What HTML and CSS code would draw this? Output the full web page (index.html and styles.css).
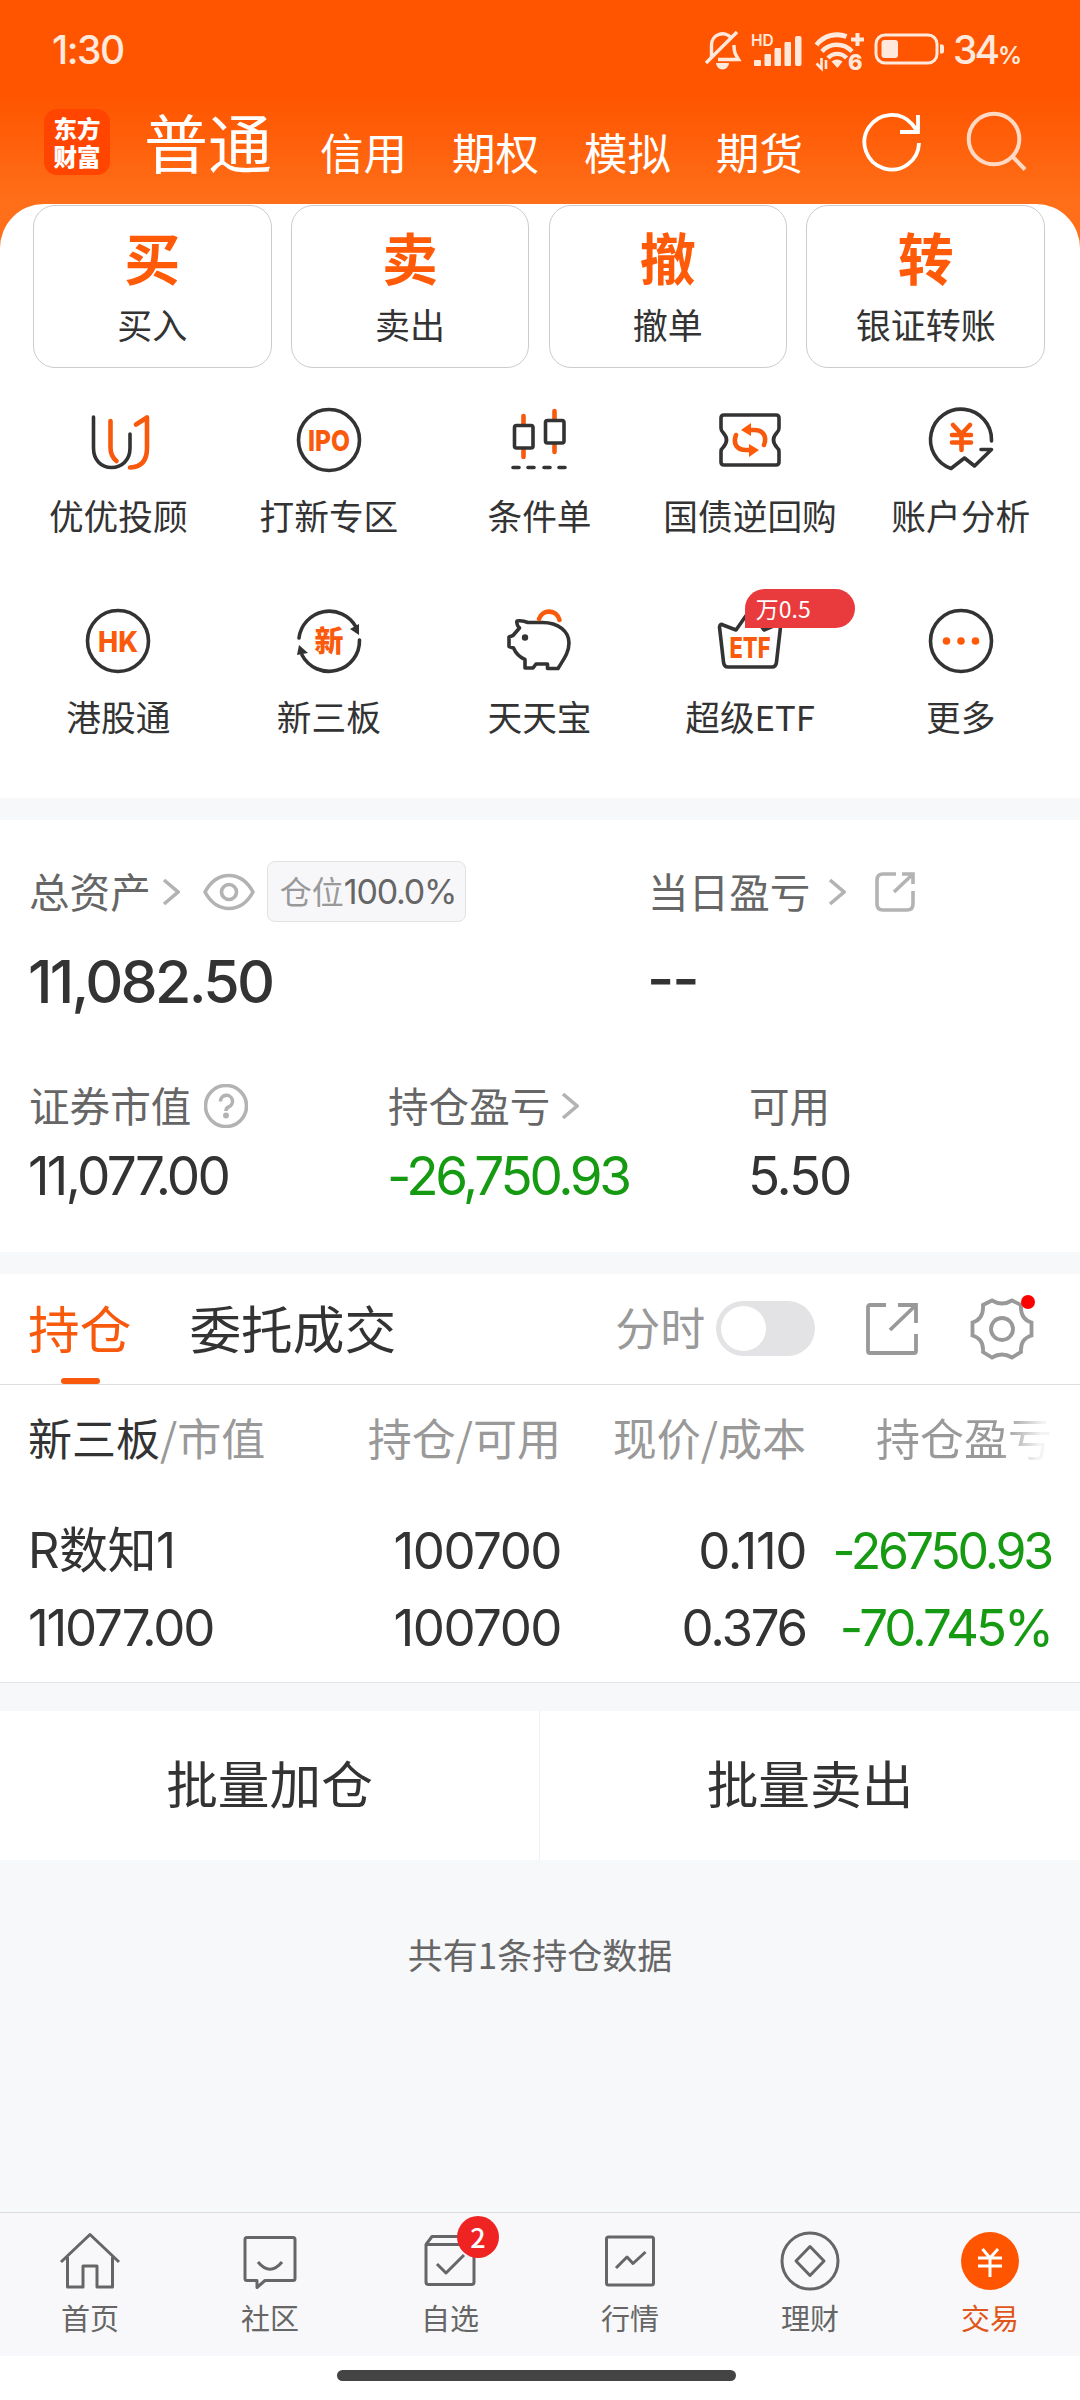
FILE: index.html
```html
<!DOCTYPE html>
<html lang="zh-CN">
<head>
<meta charset="utf-8">
<title>交易</title>
<link rel="stylesheet" href="styles.css">
</head>
<body>
<div class="top">
  <div class="status">
    <span class="clock">1:30</span>
    <div class="status-icons">
      <svg class="st-bell" width="40" height="44" viewBox="0 0 40 44" fill="none" stroke="#ffe9dc" stroke-width="3.4"><path d="M8.500 30V18a11 11 0 0 1 20-6.500M31 18c0 7 1 9 4.500 14.500H15"/><path d="M3 36 34 5"/><path d="M13 36a6.500 6.500 0 0 0 13 0z" fill="#ffe9dc" stroke="none"/></svg>
      <svg class="st-signal" width="54" height="44" viewBox="0 0 54 44" fill="#ffe9dc"><text x="0" y="19" class="hd">HD</text><rect x="3" y="33" width="7" height="6" rx="1"/><rect x="13.500" y="27" width="6.500" height="12" rx="1"/><rect x="23.500" y="21" width="6.500" height="18" rx="1"/><rect x="33.500" y="15" width="6.500" height="24" rx="1"/><rect x="44" y="9" width="6.500" height="30" rx="2"/></svg>
      <svg class="st-wifi" width="52" height="52" viewBox="0 -4 52 52" fill="none" stroke="#ffe9dc"><path d="M2.500 18c7-9.500 20-12.500 30-8.500" stroke-width="4.800"/><path d="M8 24.500c7.500-9 22-9 30 0" stroke-width="4.400"/><path d="M14 31c5-5.500 13.500-5.500 18.500 0" stroke-width="4.400"/><path d="M17.500 34.500q5.500-4 11 0L23.500 41z" fill="#ffe9dc" stroke="none"/><path d="M43.500 6v13M37 12.500h13" stroke-width="4"/><path d="M7.500 31v10.500l-5-5M12 42V33" stroke-width="2.600"/><text x="34" y="43" class="six">6</text></svg>
      <svg class="st-battery" width="71" height="34" viewBox="0 0 71 34" fill="none" stroke="#ffe9dc"><rect x="2" y="3" width="61" height="28" rx="9" stroke-width="3"/><rect x="7.500" y="8" width="16.500" height="18" rx="3" fill="#ffe9dc" stroke="none"/><path d="M66 12.500h2q2 0 2 2v5q0 2-2 2h-2z" fill="#ffe9dc" stroke="none"/></svg>
      <span class="percent">34<small>%</small></span>
    </div>
  </div>
  <div class="nav">
    <div class="logo"><span>东方</span><span>财富</span></div>
    <div class="tabs"><b>普通</b><span>信用</span><span>期权</span><span>模拟</span><span>期货</span></div>
    <svg class="refresh" width="64" height="64" viewBox="-32 -32 64 64" fill="none" stroke="#fff" stroke-width="3.800"><path d="M27 1A27.300 27.300 0 1 1 20-18L26-10"/><path d="M26-27V-10H8"/></svg>
    <svg class="search" width="64" height="64" viewBox="-32 -32 64 64" fill="none" stroke="#ffd9c4" stroke-width="4"><circle cx="-3" cy="-3" r="25.300"/><path d="M15 14 28 27.500"/></svg>
  </div>
  <section class="panel">
    <div class="actions">
      <div class="action"><b>买</b><span>买入</span></div>
      <div class="action"><b>卖</b><span>卖出</span></div>
      <div class="action"><b>撤</b><span>撤单</span></div>
      <div class="action"><b>转</b><span>银证转账</span></div>
    </div>
    <div class="grid">
      <div class="cell"><svg class="ic" viewBox="-36 -36 72 72"><path d="M-24.500-23V8C-24.500 20-17 27.500-6.500 27.500S12 20 12 8V-6"/><path class="or" d="M-7.500-19V8q0 8 6 13M18-15.500 29-22.500V8q0 19-17 19.500"/></svg><span>优优投顾</span></div>
      <div class="cell"><svg class="ic" viewBox="-36 -36 72 72"><circle r="30.500"/><text y="10.500" textLength="42" lengthAdjust="spacingAndGlyphs">IPO</text></svg><span>打新专区</span></div>
      <div class="cell"><svg class="ic" viewBox="-36 -36 72 72"><path class="or" d="M-15.500-24v8M-15.500 9v8M15.500-29v8M15.500 4v8"/><rect x="-24.500" y="-14.500" width="18.500" height="22.500" rx="2"/><rect x="6.500" y="-19.500" width="18.500" height="22.500" rx="2"/><path d="M-26 27.500h6M-11 27.500h6M5 27.500h6M20 27.500h6"/></svg><span>条件单</span></div>
      <div class="cell"><svg class="ic" viewBox="-36 -36 72 72"><path d="M-26-25H26q3 0 3 3V-12Q29-9 27-7.500 20 0 27 7.500 29 9 29 12V22q0 3-3 3H-26q-3 0-3-3V12Q-29 9-27 7.500-20 0-27-7.500-29-9-29-12V-22q0-3 3-3z"/><path class="or" d="M-3-10H4C14-10 17-3 14 5M3 10H-4C-14 10-17 3-14-5"/><path class="orf" d="M-9-10 1-17V-4zM9 10-1 17V4z"/></svg><span>国债逆回购</span></div>
      <div class="cell"><svg class="ic" viewBox="-36 -36 72 72"><path d="M30.500 1V0A30.500 30.500 0 1 0-10 28.500L3.500 18 13.500 26 30.500 9.500H20"/><path class="or" d="M-8-15 .500-6 9-15M-9-5H10M-9 2.500H10M.500-6V10"/></svg><span>账户分析</span></div>
      <div class="cell"><svg class="ic" viewBox="-36 -36 72 72"><circle r="30.500"/><text y="10.500" textLength="40" lengthAdjust="spacingAndGlyphs">HK</text></svg><span>港股通</span></div>
      <div class="cell"><svg class="ic" viewBox="-36 -36 72 72"><path d="M-30-3A30.500 30.500 0 0 1 27-14M30.500-1A30.500 30.500 0 0 1-27 14"/><path class="dk" d="M30-6 21-12 30-17zM-30 4-21 12-32 14z"/><text class="cn" y="10.500">新</text></svg><span>新三板</span></div>
      <div class="cell"><svg class="ic" viewBox="-36 -36 72 72"><path d="M-22-20Q-17-21-11-18.500L2-18.500C20-19 30-9 30 2 30 12 24 19 19 27.500H8.500V23H-3L-6 27H-14V18.500Q-22 15-25.500 7L-30 5.500V-4L-26-5.500-19.500-13Q-23-17-22-20z"/><circle class="dk" cx="-14" cy="-3.500" r="3.200"/><path class="or" d="M0-22C3-32 18-32 20.500-21"/></svg><span>天天宝</span></div>
      <div class="cell"><svg class="ic" viewBox="-36 -36 72 72"><path d="M-30.500-14Q-30-18-27-16L-14-11 0-31 14-11 28-17Q31-17 30.500-14L26.500 21Q26 26 22 26H-22Q-26 26-26.500 21z"/><text y="17" textLength="41" lengthAdjust="spacingAndGlyphs">ETF</text></svg><span>超级ETF</span><i class="badge">万0.5</i></div>
      <div class="cell"><svg class="ic" viewBox="-36 -36 72 72"><circle r="30.500"/><g class="orf"><circle cx="-14.500" r="3.800"/><circle r="3.800"/><circle cx="14.500" r="3.800"/></g></svg><span>更多</span></div>
    </div>
  </section>
</div>

<section class="assets">
  <div class="row total">
    <div class="col">
      <div class="label">总资产<svg class="chev" viewBox="0 0 18 28"><path d="M2 2 16 14 2 26"/></svg><svg class="eye" viewBox="0 0 52 38"><path d="M2 19C14-3 38-3 50 19 38 41 14 41 2 19z"/><circle cx="26" cy="19" r="7.500"/></svg><span class="tag">仓位<em>100.0%</em></span></div>
      <div class="big">11,082.50</div>
    </div>
    <div class="col">
      <div class="label">当日盈亏<svg class="chev wide" viewBox="0 0 18 28"><path d="M2 2 16 14 2 26"/></svg><svg class="share" viewBox="0 0 40 40"><path d="M21 2H8Q2 2 2 8V32Q2 38 8 38H32Q38 38 38 32V19M27 2H38V12M38 2 19 20"/></svg></div>
      <div class="big dash">--</div>
    </div>
  </div>
  <div class="row detail">
    <div><div class="label">证券市值<svg class="help" viewBox="-22 -22 44 44"><circle r="20.500"/><path d="M-5.500-4.500a6 6 0 1 1 8 5.500Q0 2 0 5"/><circle class="dot" cy="9.500" r="1.200"/></svg></div><div class="val v1">11,077.00</div></div>
    <div><div class="label">持仓盈亏<svg class="chev" viewBox="0 0 18 28"><path d="M2 2 16 14 2 26"/></svg></div><div class="val v2 green">-26,750.93</div></div>
    <div><div class="label">可用</div><div class="val v3">5.50</div></div>
  </div>
</section>

<section class="holdings">
  <div class="bar">
    <div class="htab on">持仓</div><div class="htab">委托成交</div>
    <span class="fs">分时</span><i class="toggle"></i>
    <svg class="share2" viewBox="0 0 54 54"><path d="M21 3H5Q3 3 3 5V49Q3 51 5 51H49Q51 51 51 49V32M33 3H51V21M51 3 25 28"/></svg>
    <div class="gear"><svg viewBox="-32 -32 64 64"><path d="M-10-28.500Q0-22.500 10-28.500L19-24Q18-10 29.500-6.500V6.500Q18 10 19 23L10 28.500Q0 22.500-10 28.500L-19 23Q-18 10-29.500 6.500V-6.500Q-18-10-19-24z"/><circle r="11"/></svg><i></i></div>
  </div>
  <div class="tr th"><span><b>新三板</b>/市值</span><span>持仓/可用</span><span>现价/成本</span><span class="fade">持仓盈亏</span></div>
  <div class="tr td"><span class="n1">R数知1</span><span class="n2">100700</span><span class="n3">0.110</span><span class="green n4">-26750.93</span></div>
  <div class="tr td last"><span>11077.00</span><span class="n2">100700</span><span>0.376</span><span class="green n5">-70.745%</span></div>
</section>

<div class="batch"><div>批量加仓</div><div>批量卖出</div></div>
<div class="count">共有1条持仓数据</div>

<nav class="bottom">
  <a><svg viewBox="-32 -32 64 64"><path d="M-29 1 0-26.500 29 1M-22.500-4V26H-7V5H7V26H22.500V-4"/></svg>首页</a>
  <a><svg viewBox="-32 -32 64 64"><path d="M-23-23.500H23q2 0 2 2V17.500q0 2-2 2H-5L-13 26.500V19.500H-23q-2 0-2-2V-21.500q0-2 2-2z"/><path d="M-12 1Q0 15.500 12 1"/></svg>社区</a>
  <a><svg viewBox="-32 -32 64 64"><path d="M-24-16.500H24V21q0 2.500-2.500 2.500H-21.500q-2.500 0-2.500-2.500zL-18-24.500H18L24-16.500M-13 3-4 12 14-6"/></svg><i class="num2">2</i>自选</a>
  <a><svg viewBox="-32 -32 64 64"><rect x="-23.500" y="-24" width="47" height="48" rx="2"/><path d="M-14 7-3-4 3 2.500 15.500-9"/></svg>行情</a>
  <a><svg viewBox="-32 -32 64 64"><circle r="28"/><path d="M-14 0 0-14.500 14 0 0 14.500z"/></svg>理财</a>
  <a class="act"><svg viewBox="-32 -32 64 64"><circle r="29" fill="#ff5500" stroke="none"/><path class="yen" d="M-7.500-12 0-3 8-12M-12-3H12M-12 5H12M0-3V16"/></svg>交易</a>
</nav>
<div class="home"><i></i></div>
</body>
</html>
```

FILE: styles.css
```css
* { box-sizing: border-box; }
body { margin: 0; width: 1080px; height: 2400px; display: flex; flex-direction: column; background: #f7f8fa; color: #333; font-family: "Noto Sans CJK SC", sans-serif; font-size: 35px; overflow: hidden; }
i, em { font-style: normal; }
b { font-weight: inherit; }
svg { display: block; flex: none; }

/* Header */
.top { background: linear-gradient(#ff5500 96px, #ff6f19 204px); }
.status { height: 98px; display: flex; align-items: center; justify-content: space-between; padding: 0 64px 0 52px; color: #ffe9dc; font-family: Inter, sans-serif; }
.clock { font-size: 39px; letter-spacing: -1.5px; font-weight: 450; }
.status-icons { display: flex; align-items: center; }
.st-signal { margin-left: 8px; }
.st-wifi { margin-left: 9px; }
.st-battery { margin-left: 8px; }
.hd { font: 600 15.500px Inter; }
.six { font: 800 22px Inter; stroke: none; fill: #ffe9dc; }
.percent { font-size: 39px; margin-left: 8px; letter-spacing: -3px; white-space: nowrap; width: 63px; font-weight: 450; }
.percent small { font-size: 24px; margin-left: 1px; font-weight: 600; }
.nav { height: 106px; padding: 11px 0 0 44px; display: flex; color: #fff; }
.logo { width: 66px; height: 66px; border-radius: 13px; background: #ff4500; display: flex; flex-direction: column; align-items: center; justify-content: center; }
.logo span { font-weight: 900; font-size: 23.500px; line-height: 28px; }
.tabs { display: flex; align-items: baseline; margin-left: 34px; line-height: 66px; }
.tabs b { font-size: 64px; width: 176px; margin-top: -2px; }
.tabs span { position: relative; top: 2px; font-size: 43.500px; width: 132px; }
.refresh { margin: 1px 0 0 12px; }
.search { margin: 1px 0 0 41px; }

.panel { height: 594px; background: #fff; border-radius: 44px 44px 0 0; padding: 1px 33px 0; }
.actions { display: grid; grid-template-columns: repeat(4, 238.500px); gap: 19.300px; }
.action { height: 163px; border: 1px solid #ccc; border-radius: 22px; display: flex; flex-direction: column; align-items: center; color: #333; }
.action b { font-size: 56px; font-weight: 700; color: #ff5a08; line-height: 60px; margin-top: 20px; }
.action span { font-size: 35px; line-height: 44px; margin-top: 16px; }
.grid { margin: 36px -19px 0 -20px; display: grid; grid-template-columns: repeat(5, 1fr); grid-auto-rows: 201px; }
.cell { position: relative; display: flex; flex-direction: column; align-items: center; font-size: 34.700px; white-space: nowrap; }
.cell span { line-height: 44px; margin-top: 17px; }
.ic { width: 72px; height: 72px; fill: none; stroke: #333; stroke-width: 3.600; stroke-linecap: round; stroke-linejoin: round; }
.ic .or { stroke: #f8590d; stroke-width: 4.600; }
.ic .orf { fill: #ff5a08; stroke: none; }
.ic .dk { fill: #333; stroke: none; }
.ic text { font: 800 29px Inter; fill: #fa5a0c; stroke: none; text-anchor: middle; }
.ic .cn { font: 900 29px "Noto Sans CJK SC"; }
.badge { position: absolute; left: 100px; top: -16px; width: 110px; height: 39px; border-radius: 20px 20px 20px 0; background: #e93b3d; color: #fff; font-size: 23px; line-height: 38px; padding-left: 11px; }

/* Assets */
.assets { margin-top: 22px; height: 432px; background: #fff; padding: 41px 29px 0; }
.row { display: grid; }
.total { grid-template-columns: 619px 1fr; }
.detail { grid-template-columns: 359px 361px 1fr; margin-top: 57px; }
.label { display: flex; align-items: center; height: 60px; font-size: 40.600px; line-height: 54px; color: #666; white-space: nowrap; }
.label svg { fill: none; stroke: #b3b3b3; stroke-width: 3.600; margin-top: 2px; }
.chev { width: 18px; height: 28px; margin-left: 11px; }
.chev.wide { margin-left: 18px; }
.eye { width: 52px; height: 38px; margin-left: 23px; }
.share { width: 40px; height: 40px; margin-left: 29px; }
.help { width: 44px; height: 44px; margin-left: 13px; }
.help .dot { fill: #b3b3b3; }
.tag { height: 61px; width: 199px; margin-left: 12px; border: 1px solid #e2e2e5; border-radius: 8px; background: #f7f7f9; color: #999; font-size: 32px; line-height: 56px; padding-left: 12px; }
.tag em { color: #666; font-family: Inter; font-size: 34px; letter-spacing: -1.200px; }
.big { font-family: Inter; font-size: 59px; font-weight: 450; line-height: 72px; margin: 25px 0 0 -1px; letter-spacing: -2.700px; }
.dash { letter-spacing: -2px; position: relative; top: -3px; }
.val { font-family: Inter; font-size: 53px; line-height: 64px; margin: 9px 0 -2px -1px; letter-spacing: -2.700px; }
.v2 { letter-spacing: -3.300px; }
.v3 { letter-spacing: -2.200px; }
.green { color: #159a12; }

/* Holdings */
.holdings { margin-top: 22px; height: 409px; background: #fff; border-bottom: 1px solid #e5e5e8; }
.bar { height: 111px; border-bottom: 1px solid #ddd; display: flex; align-items: center; padding-left: 28px; }
.htab { position: relative; font-size: 51.700px; line-height: 106px; height: 110px; margin-right: 58px; white-space: nowrap; }
.on { color: #f8590d; }
.on::after { content: ""; position: absolute; left: 33px; bottom: 0; width: 39px; height: 6px; border-radius: 3px; background: #f8590d; }
.fs { color: #999; font-size: 45px; line-height: 60px; margin: -4px 11px 0 161px; white-space: nowrap; }
.toggle { width: 99px; height: 55px; border-radius: 28px; background: #e3e3e6; padding: 5px; margin-top: -2px; }
.toggle::after { content: ""; display: block; width: 45px; height: 45px; border-radius: 50%; background: #fff; }
.share2 { width: 54px; height: 54px; margin-left: 50px; }
.gear { position: relative; margin-left: 51px; }
.gear svg { width: 64px; height: 64px; }
.gear i { position: absolute; left: 51px; top: -2px; width: 14px; height: 14px; border-radius: 50%; background: #f00; }
.share2, .gear svg { fill: none; stroke: #999; stroke-width: 3.800; }
.tr { display: grid; grid-template-columns: 270px 263px 245px 245px; padding-left: 28px; white-space: nowrap; align-items: center; }
.tr span { text-align: right; }
.tr span:first-child { text-align: left; }
.th { height: 104px; color: #999; font-size: 44px; }
.th b { color: #333; }
.th .fade { width: 175px; justify-self: end; background: linear-gradient(100deg, #999 130px, #f4f4f4 168px); -webkit-background-clip: text; background-clip: text; color: transparent; }
.td { height: 78px; margin-top: 23px; font-family: Inter, "Noto Sans CJK SC"; font-size: 51px; letter-spacing: -2.200px; line-height: 60px; }
.td.last { margin-top: -1px; }
.td .n1 { letter-spacing: -.500px; font-size: 49px; }
.td .n2 { letter-spacing: -1.500px; }
.td .n3 { letter-spacing: -1.400px; }
.td .n4 { font-size: 50px; letter-spacing: -3.200px; }
.td .n5 { letter-spacing: -3px; }

.batch { margin-top: 28px; height: 149px; background: #fff; display: grid; grid-template-columns: 1fr 1fr; text-align: center; font-size: 51.700px; line-height: 141px; }
.batch div:first-child { border-right: 1px solid #f0f0f2; }
.count { height: 352px; padding-top: 69px; text-align: center; color: #666; font-size: 35px; line-height: 50px; }

/* Bottom navigation */
.bottom { height: 144px; background: #f8f8fa; border-top: 1px solid #ddd; display: grid; grid-template-columns: repeat(6, 1fr); }
.bottom a { position: relative; display: flex; flex-direction: column; align-items: center; color: #666; font-size: 29px; line-height: 40px; padding-top: 16px; }
.bottom svg { width: 64px; height: 64px; fill: none; stroke: #666; stroke-width: 3; margin-bottom: 4px; stroke-linejoin: round; }
.bottom .act { color: #e0561a; }
.bottom .yen { stroke: #fff; }
.num2 { position: absolute; left: 97px; top: 3px; width: 42px; height: 42px; border-radius: 50%; background: #f02323; color: #fff; font: 500 27px/41px "Noto Sans CJK SC"; text-align: center; }
.home { height: 44px; background: #fff; display: flex; justify-content: center; padding: 14px 7px 0 0; }
.home i { width: 399px; height: 11px; border-radius: 6px; background: #444; }
```
